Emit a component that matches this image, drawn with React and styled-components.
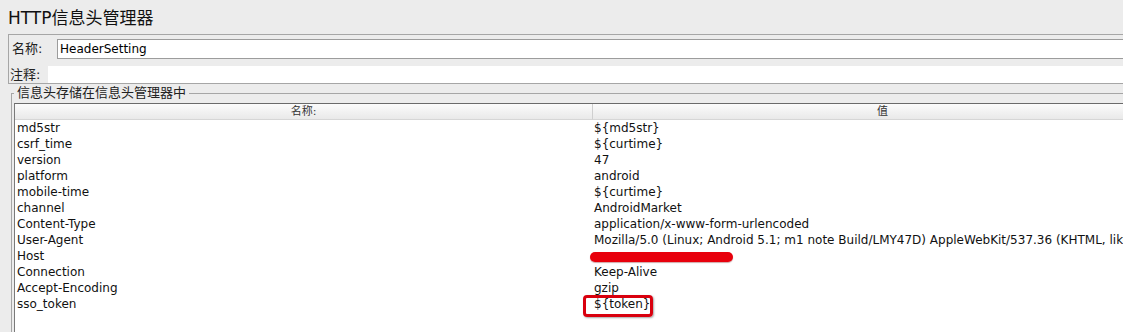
import React from "react";
import styled, { createGlobalStyle } from "styled-components";

const GlobalStyle = createGlobalStyle`
  html, body {
    margin: 0;
    padding: 0;
    background: #ececec;
    overflow: hidden;
  }
  body {
    font-family: "DejaVu Sans", "Noto Sans CJK SC", sans-serif;
    color: #111;
  }
`;

const Page = styled.div`
  width: 1200px;
  height: 332px;
  background: #ececec;
`;

const Title = styled.div`
  height: 34px;
  padding-left: 8px;
  font-size: 17px;
  line-height: 36px;
  color: #111;
`;

const InfoBox = styled.div`
  margin-left: 8px;
  border-top: 1px solid #a6a6a6;
  border-left: 1px solid #a6a6a6;
  border-bottom: 1px solid #a6a6a6;
  display: flex;
  flex-direction: column;
  gap: 7px;
  padding-top: 4px;
`;

const FieldRow = styled.div`
  display: flex;
  align-items: center;
  padding-left: ${(p) => p.$pad}px;
`;

const Label = styled.span`
  width: ${(p) => p.$w}px;
  flex: none;
  font-size: 13px;
  line-height: 16px;
  color: #222;
`;

const NameInput = styled.div`
  flex: 1;
  height: 18px;
  background: #fff;
  border: 1px solid #9c9c9c;
  font-size: 12px;
  line-height: 18px;
  padding-left: 2px;
  color: #000;
`;

const CommentInput = styled.div`
  flex: 1;
  height: 17px;
  background: #fff;
`;

const Group = styled.fieldset`
  margin: 1px 0 0 11px;
  padding: 2px 0 0 2px;
  border: none;
  border-top: 1px solid #a6a6a6;
  border-left: 1px solid #a6a6a6;
  min-width: 0;
`;

const Legend = styled.legend`
  font-size: 13px;
  line-height: 16px;
  padding: 0 3px;
  margin-left: 0;
  color: #222;
`;

const Table = styled.div`
  width: 1157px;
  height: 240px;
  background: #fff;
  border-top: 1px solid #6a6a6a;
  border-left: 1px solid #7a7a7a;
`;

const Grid = styled.div`
  display: grid;
  grid-template-columns: 577px 1fr;
`;

const HeadCell = styled.div`
  height: 15px;
  border-bottom: 1px solid #d6d6d6;
  background: linear-gradient(#fbfbfb, #e9e9e9);
  border-left: ${(p) => (p.$divider ? "1px solid #cfcfcf" : "none")};
  font-size: 11px;
  line-height: 15px;
  text-align: center;
  color: #333;
`;

const Cell = styled.div`
  position: relative;
  height: 16px;
  padding-left: 2px;
  font-size: 12px;
  line-height: 16px;
  white-space: nowrap;
  overflow: visible;
  color: #111;
`;

const Redaction = styled.div`
  width: 143px;
  height: 10px;
  margin: 4px 0 0 -4px;
  border-radius: 5px;
  background: #e8000c;
  box-shadow: 0 1px 1px rgba(120, 0, 0, 0.35);
`;

const Highlight = styled.div`
  position: absolute;
  left: -9px;
  top: -1px;
  width: 64px;
  height: 16px;
  border: 3px solid #d9000e;
  border-radius: 4px;
  box-shadow: 1px 1px 2px rgba(0, 0, 0, 0.35);
`;

const rows = [
  ["md5str", "${md5str}"],
  ["csrf_time", "${curtime}"],
  ["version", "47"],
  ["platform", "android"],
  ["mobile-time", "${curtime}"],
  ["channel", "AndroidMarket"],
  ["Content-Type", "application/x-www-form-urlencoded"],
  [
    "User-Agent",
    "Mozilla/5.0 (Linux; Android 5.1; m1 note Build/LMY47D) AppleWebKit/537.36 (KHTML, like",
  ],
  ["Host", null, "redacted"],
  ["Connection", "Keep-Alive"],
  ["Accept-Encoding", "gzip"],
  ["sso_token", "${token}", "highlight"],
];

export default function App() {
  return (
    <>
      <GlobalStyle />
      <Page>
        <Title>HTTP信息头管理器</Title>
        <InfoBox>
          <FieldRow $pad={3}>
            <Label $w={45}>名称:</Label>
            <NameInput>HeaderSetting</NameInput>
          </FieldRow>
          <FieldRow $pad={1}>
            <Label $w={38}>注释:</Label>
            <CommentInput />
          </FieldRow>
        </InfoBox>
        <Group>
          <Legend>信息头存储在信息头管理器中</Legend>
          <Table>
            <Grid>
              <HeadCell>名称:</HeadCell>
              <HeadCell $divider>值</HeadCell>
              {rows.map(([name, value, mark]) => (
                <React.Fragment key={name}>
                  <Cell>{name}</Cell>
                  <Cell>
                    {mark === "redacted" ? <Redaction /> : value}
                    {mark === "highlight" && <Highlight />}
                  </Cell>
                </React.Fragment>
              ))}
            </Grid>
          </Table>
        </Group>
      </Page>
    </>
  );
}
